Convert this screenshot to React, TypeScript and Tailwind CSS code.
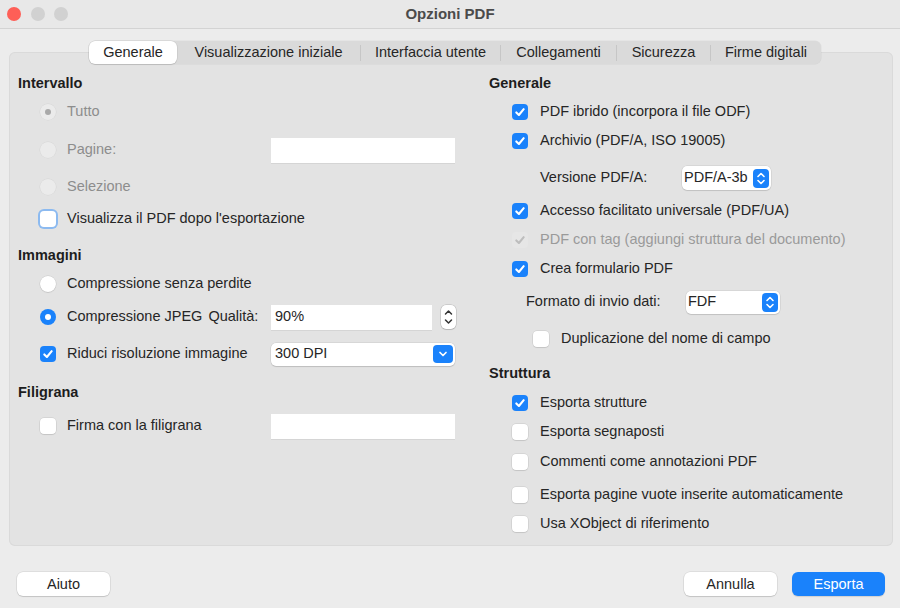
import React from 'react';

const BLUE = 'bg-[#1a82fb]';

function CheckMark({ color = 'white' }: { color?: string }) {
  return (
    <svg width="16" height="16" viewBox="0 0 16 16">
      <path d="M4.3 8.4 L6.9 11 L11.7 5.2" fill="none" stroke={color} strokeWidth="2.1" strokeLinecap="round" strokeLinejoin="round" />
    </svg>
  );
}

function Checkbox({ checked = false, disabled = false, focus = false }: { checked?: boolean; disabled?: boolean; focus?: boolean }) {
  if (checked && disabled) {
    return (
      <div className="w-4 h-4 shrink-0 rounded-[4px] bg-[#e6e6e6] flex items-center justify-center">
        <CheckMark color="#bdbdbd" />
      </div>
    );
  }
  if (checked) {
    return (
      <div className={`w-4 h-4 shrink-0 rounded-[4px] ${BLUE} flex items-center justify-center`}>
        <CheckMark />
      </div>
    );
  }
  if (focus) {
    return <div className="w-4 h-4 shrink-0 rounded-[4px] bg-white shadow-[0_0_0_2px_#8cbaf0]" />;
  }
  return <div className="w-4 h-4 shrink-0 rounded-[4px] bg-white shadow-[0_0_0_0.5px_rgba(0,0,0,0.12),0_1px_1px_rgba(0,0,0,0.08)]" />;
}

function Radio({ selected = false, disabled = false }: { selected?: boolean; disabled?: boolean }) {
  if (disabled) {
    return (
      <div className="w-4 h-4 shrink-0 rounded-full bg-[#ebebeb] shadow-[0_0_0_0.5px_rgba(0,0,0,0.06)] flex items-center justify-center">
        {selected && <div className="w-[6px] h-[6px] rounded-full bg-[#a9a9a9]" />}
      </div>
    );
  }
  if (selected) {
    return (
      <div className={`w-4 h-4 shrink-0 rounded-full ${BLUE} flex items-center justify-center`}>
        <div className="w-[6px] h-[6px] rounded-full bg-white" />
      </div>
    );
  }
  return <div className="w-4 h-4 shrink-0 rounded-full bg-white shadow-[0_0_0_0.5px_rgba(0,0,0,0.12),0_1px_1px_rgba(0,0,0,0.08)]" />;
}

function UpDown() {
  return (
    <svg width="16" height="19" viewBox="0 0 16 19">
      <path d="M5 7.5 L8 4.5 L11 7.5" fill="none" stroke="white" strokeWidth="1.6" strokeLinecap="round" strokeLinejoin="round" />
      <path d="M5 11.5 L8 14.5 L11 11.5" fill="none" stroke="white" strokeWidth="1.6" strokeLinecap="round" strokeLinejoin="round" />
    </svg>
  );
}

function Select({ value, width, height }: { value: string; width: string; height: string }) {
  return (
    <div className={`${width} ${height} bg-white rounded-[5px] shadow-[0_0_0_0.5px_rgba(0,0,0,0.1),0_1px_1px_rgba(0,0,0,0.1)] flex items-center justify-between pl-[2px] pr-[2px]`}>
      <span>{value}</span>
      <div className={`w-4 h-[19px] rounded-[4px] ${BLUE} flex items-center justify-center`}>
        <UpDown />
      </div>
    </div>
  );
}

function Row({ mt, pl, children }: { mt: string; pl?: string; children: React.ReactNode }) {
  return <div className={`h-6 flex items-center ${mt} ${pl ?? ''}`}>{children}</div>;
}

function Heading({ children, mt = '' }: { children: React.ReactNode; mt?: string }) {
  return <div className={`h-6 flex items-center font-bold text-[#1d1d1d] ${mt}`}>{children}</div>;
}

function Field({ width, height = 'h-[25px]', value }: { width: string; height?: string; value?: string }) {
  return (
    <div className={`${width} ${height} bg-white flex items-center pl-[4px] shadow-[0_1px_0_rgba(0,0,0,0.06)]`}>
      {value}
    </div>
  );
}

const tabs = [
  { label: 'Generale', w: 'w-[88px]' },
  { label: 'Visualizzazione iniziale', w: 'w-[183px]' },
  { label: 'Interfaccia utente', w: 'w-[139px]' },
  { label: 'Collegamenti', w: 'w-[115px]' },
  { label: 'Sicurezza', w: 'w-[93px]' },
  { label: 'Firme digitali', w: 'w-[110px]' },
];

export default function App() {
  return (
    <div className="w-[900px] h-[608px] bg-[#ececec] flex flex-col font-['Liberation_Sans',Arial,sans-serif] text-[14.5px] text-[#262626]">
      {/* title bar */}
      <div className="h-[29px] shrink-0 bg-[#e8e8e8] border-b border-[#d3d3d3] flex items-center relative">
        <div className="flex gap-[9.5px] pl-[7px]">
          <div className="w-[14px] h-[14px] rounded-full bg-[#fe5f57]" />
          <div className="w-[14px] h-[14px] rounded-full bg-[#d1d1d1]" />
          <div className="w-[14px] h-[14px] rounded-full bg-[#d1d1d1]" />
        </div>
        <div className="absolute inset-0 flex items-center justify-center font-bold text-[15px] text-[#4b4b4b]">
          Opzioni PDF
        </div>
      </div>

      {/* tabs */}
      <div className="pt-[12px]">
        <div className="relative z-10 h-[23px] flex pl-[89px]">
          <div className="flex rounded-[6px] bg-[#dadada] shadow-[0_0_0_0.5px_rgba(0,0,0,0.06)]">
            {tabs.map((t, i) => (
              <div key={t.label} className="flex items-center">
                {i > 1 && <div className="w-px h-[16px] bg-[#c6c6c6]" />}
                <div
                  className={`${t.w} h-[23px] flex items-center justify-center ${
                    i === 0 ? 'bg-white rounded-[6px] shadow-[0_0_0_0.5px_rgba(0,0,0,0.1),0_1px_1px_rgba(0,0,0,0.1)]' : ''
                  }`}
                >
                  {t.label}
                </div>
              </div>
            ))}
          </div>
        </div>

        {/* panel */}
        <div className="-mt-[12px] ml-[9px] mr-[7px] h-[494px] bg-[#e3e3e3] rounded-[6px] shadow-[inset_0_0_0_1px_#dadada] flex pt-[20px]">
          {/* left column */}
          <div className="w-[480px] pl-[9px] flex flex-col">
            <Heading>Intervallo</Heading>
            <Row mt="mt-[4px]" pl="pl-[22px]">
              <div className="w-[231px] flex items-center gap-[11px] text-[#8d8d8d]">
                <Radio disabled selected />
                <span>Tutto</span>
              </div>
            </Row>
            <Row mt="mt-[14px]" pl="pl-[22px]">
              <div className="w-[231px] flex items-center gap-[11px] text-[#8d8d8d]">
                <Radio disabled />
                <span>Pagine:</span>
              </div>
              <Field width="w-[184px]" />
            </Row>
            <Row mt="mt-[13px]" pl="pl-[22px]">
              <div className="w-[231px] flex items-center gap-[11px] text-[#8d8d8d]">
                <Radio disabled />
                <span>Selezione</span>
              </div>
            </Row>
            <Row mt="mt-[8px]" pl="pl-[22px]">
              <div className="flex items-center gap-[11px]">
                <Checkbox focus />
                <span>Visualizza il PDF dopo l'esportazione</span>
              </div>
            </Row>

            <Heading mt="mt-[13px]">Immagini</Heading>
            <Row mt="mt-[4px]" pl="pl-[22px]">
              <div className="flex items-center gap-[11px]">
                <Radio />
                <span>Compressione senza perdite</span>
              </div>
            </Row>
            <Row mt="mt-[9px]" pl="pl-[22px]">
              <div className="w-[231px] flex items-center gap-[11px]">
                <Radio selected />
                <span>Compressione JPEG</span>
                <span className="-ml-[5px]">Qualità:</span>
              </div>
              <Field width="w-[161px]" value="90%" />
              <div className="ml-[9px] w-[15px] h-[24px] bg-white rounded-[5px] shadow-[0_0_0_0.5px_rgba(0,0,0,0.2),0_1px_1px_rgba(0,0,0,0.1)] flex items-center justify-center">
                <svg width="15" height="24" viewBox="0 0 15 24">
                  <path d="M4.5 9 L7.5 6 L10.5 9" fill="none" stroke="#333" strokeWidth="1.5" strokeLinecap="round" strokeLinejoin="round" />
                  <path d="M4.5 15 L7.5 18 L10.5 15" fill="none" stroke="#333" strokeWidth="1.5" strokeLinecap="round" strokeLinejoin="round" />
                </svg>
              </div>
            </Row>
            <Row mt="mt-[13px]" pl="pl-[22px]">
              <div className="w-[231px] flex items-center gap-[11px]">
                <Checkbox checked />
                <span>Riduci risoluzione immagine</span>
              </div>
              <div className="w-[184px] h-[23px] bg-white rounded-[5px] shadow-[0_0_0_0.5px_rgba(0,0,0,0.1),0_1px_1px_rgba(0,0,0,0.12)] flex items-center justify-between pl-[4px] pr-[2px]">
                <span>300 DPI</span>
                <div className={`w-[20px] h-[18px] rounded-[4px] ${BLUE} flex items-center justify-center`}>
                  <svg width="20" height="18" viewBox="0 0 20 18">
                    <path d="M7 7.5 L10 10.5 L13 7.5" fill="none" stroke="white" strokeWidth="1.7" strokeLinecap="round" strokeLinejoin="round" />
                  </svg>
                </div>
              </div>
            </Row>

            <Heading mt="mt-[15px]">Filigrana</Heading>
            <Row mt="mt-[9px]" pl="pl-[22px]">
              <div className="w-[231px] flex items-center gap-[11px]">
                <Checkbox />
                <span>Firma con la filigrana</span>
              </div>
              <Field width="w-[184px]" />
            </Row>
          </div>

          {/* right column */}
          <div className="flex-1 flex flex-col">
            <Heading>Generale</Heading>
            <Row mt="mt-[4px]" pl="pl-[23px]">
              <div className="flex items-center gap-[12px]">
                <Checkbox checked />
                <span>PDF ibrido (incorpora il file ODF)</span>
              </div>
            </Row>
            <Row mt="mt-[5px]" pl="pl-[23px]">
              <div className="flex items-center gap-[12px]">
                <Checkbox checked />
                <span>Archivio (PDF/A, ISO 19005)</span>
              </div>
            </Row>
            <Row mt="mt-[13px]" pl="pl-[51px]">
              <span className="w-[142px]">Versione PDF/A:</span>
              <Select value="PDF/A-3b" width="w-[89px]" height="h-[24px]" />
            </Row>
            <Row mt="mt-[9px]" pl="pl-[23px]">
              <div className="flex items-center gap-[12px]">
                <Checkbox checked />
                <span>Accesso facilitato universale (PDF/UA)</span>
              </div>
            </Row>
            <Row mt="mt-[5px]" pl="pl-[23px]">
              <div className="flex items-center gap-[12px] text-[#9a9a9a]">
                <Checkbox checked disabled />
                <span>PDF con tag (aggiungi struttura del documento)</span>
              </div>
            </Row>
            <Row mt="mt-[5px]" pl="pl-[23px]">
              <div className="flex items-center gap-[12px]">
                <Checkbox checked />
                <span>Crea formulario PDF</span>
              </div>
            </Row>
            <Row mt="mt-[9px]" pl="pl-[37px]">
              <span className="w-[160px]">Formato di invio dati:</span>
              <Select value="FDF" width="w-[94px]" height="h-[23px]" />
            </Row>
            <Row mt="mt-[13px]" pl="pl-[44px]">
              <div className="flex items-center gap-[12px]">
                <Checkbox />
                <span>Duplicazione del nome di campo</span>
              </div>
            </Row>

            <Heading mt="mt-[11px]">Struttura</Heading>
            <Row mt="mt-[5px]" pl="pl-[23px]">
              <div className="flex items-center gap-[12px]">
                <Checkbox checked />
                <span>Esporta strutture</span>
              </div>
            </Row>
            <Row mt="mt-[5px]" pl="pl-[23px]">
              <div className="flex items-center gap-[12px]">
                <Checkbox />
                <span>Esporta segnaposti</span>
              </div>
            </Row>
            <Row mt="mt-[6px]" pl="pl-[23px]">
              <div className="flex items-center gap-[12px]">
                <Checkbox />
                <span>Commenti come annotazioni PDF</span>
              </div>
            </Row>
            <Row mt="mt-[9px]" pl="pl-[23px]">
              <div className="flex items-center gap-[12px]">
                <Checkbox />
                <span>Esporta pagine vuote inserite automaticamente</span>
              </div>
            </Row>
            <Row mt="mt-[5px]" pl="pl-[23px]">
              <div className="flex items-center gap-[12px]">
                <Checkbox />
                <span>Usa XObject di riferimento</span>
              </div>
            </Row>
          </div>
        </div>
      </div>

      {/* buttons */}
      <div className="mt-[26px] flex items-center pl-[17px] pr-[15px]">
        <button className="w-[93px] h-[24px] pt-px bg-white rounded-[6px] shadow-[0_0_0_0.5px_rgba(0,0,0,0.12),0_1px_1px_rgba(0,0,0,0.12)]">
          Aiuto
        </button>
        <div className="flex-1" />
        <button className="w-[93px] h-[24px] pt-px bg-white rounded-[6px] shadow-[0_0_0_0.5px_rgba(0,0,0,0.12),0_1px_1px_rgba(0,0,0,0.12)]">
          Annulla
        </button>
        <button className={`ml-[15px] w-[93px] h-[24px] pt-px ${BLUE} text-white rounded-[6px] shadow-[0_1px_1px_rgba(0,0,0,0.12)]`}>
          Esporta
        </button>
      </div>
    </div>
  );
}
